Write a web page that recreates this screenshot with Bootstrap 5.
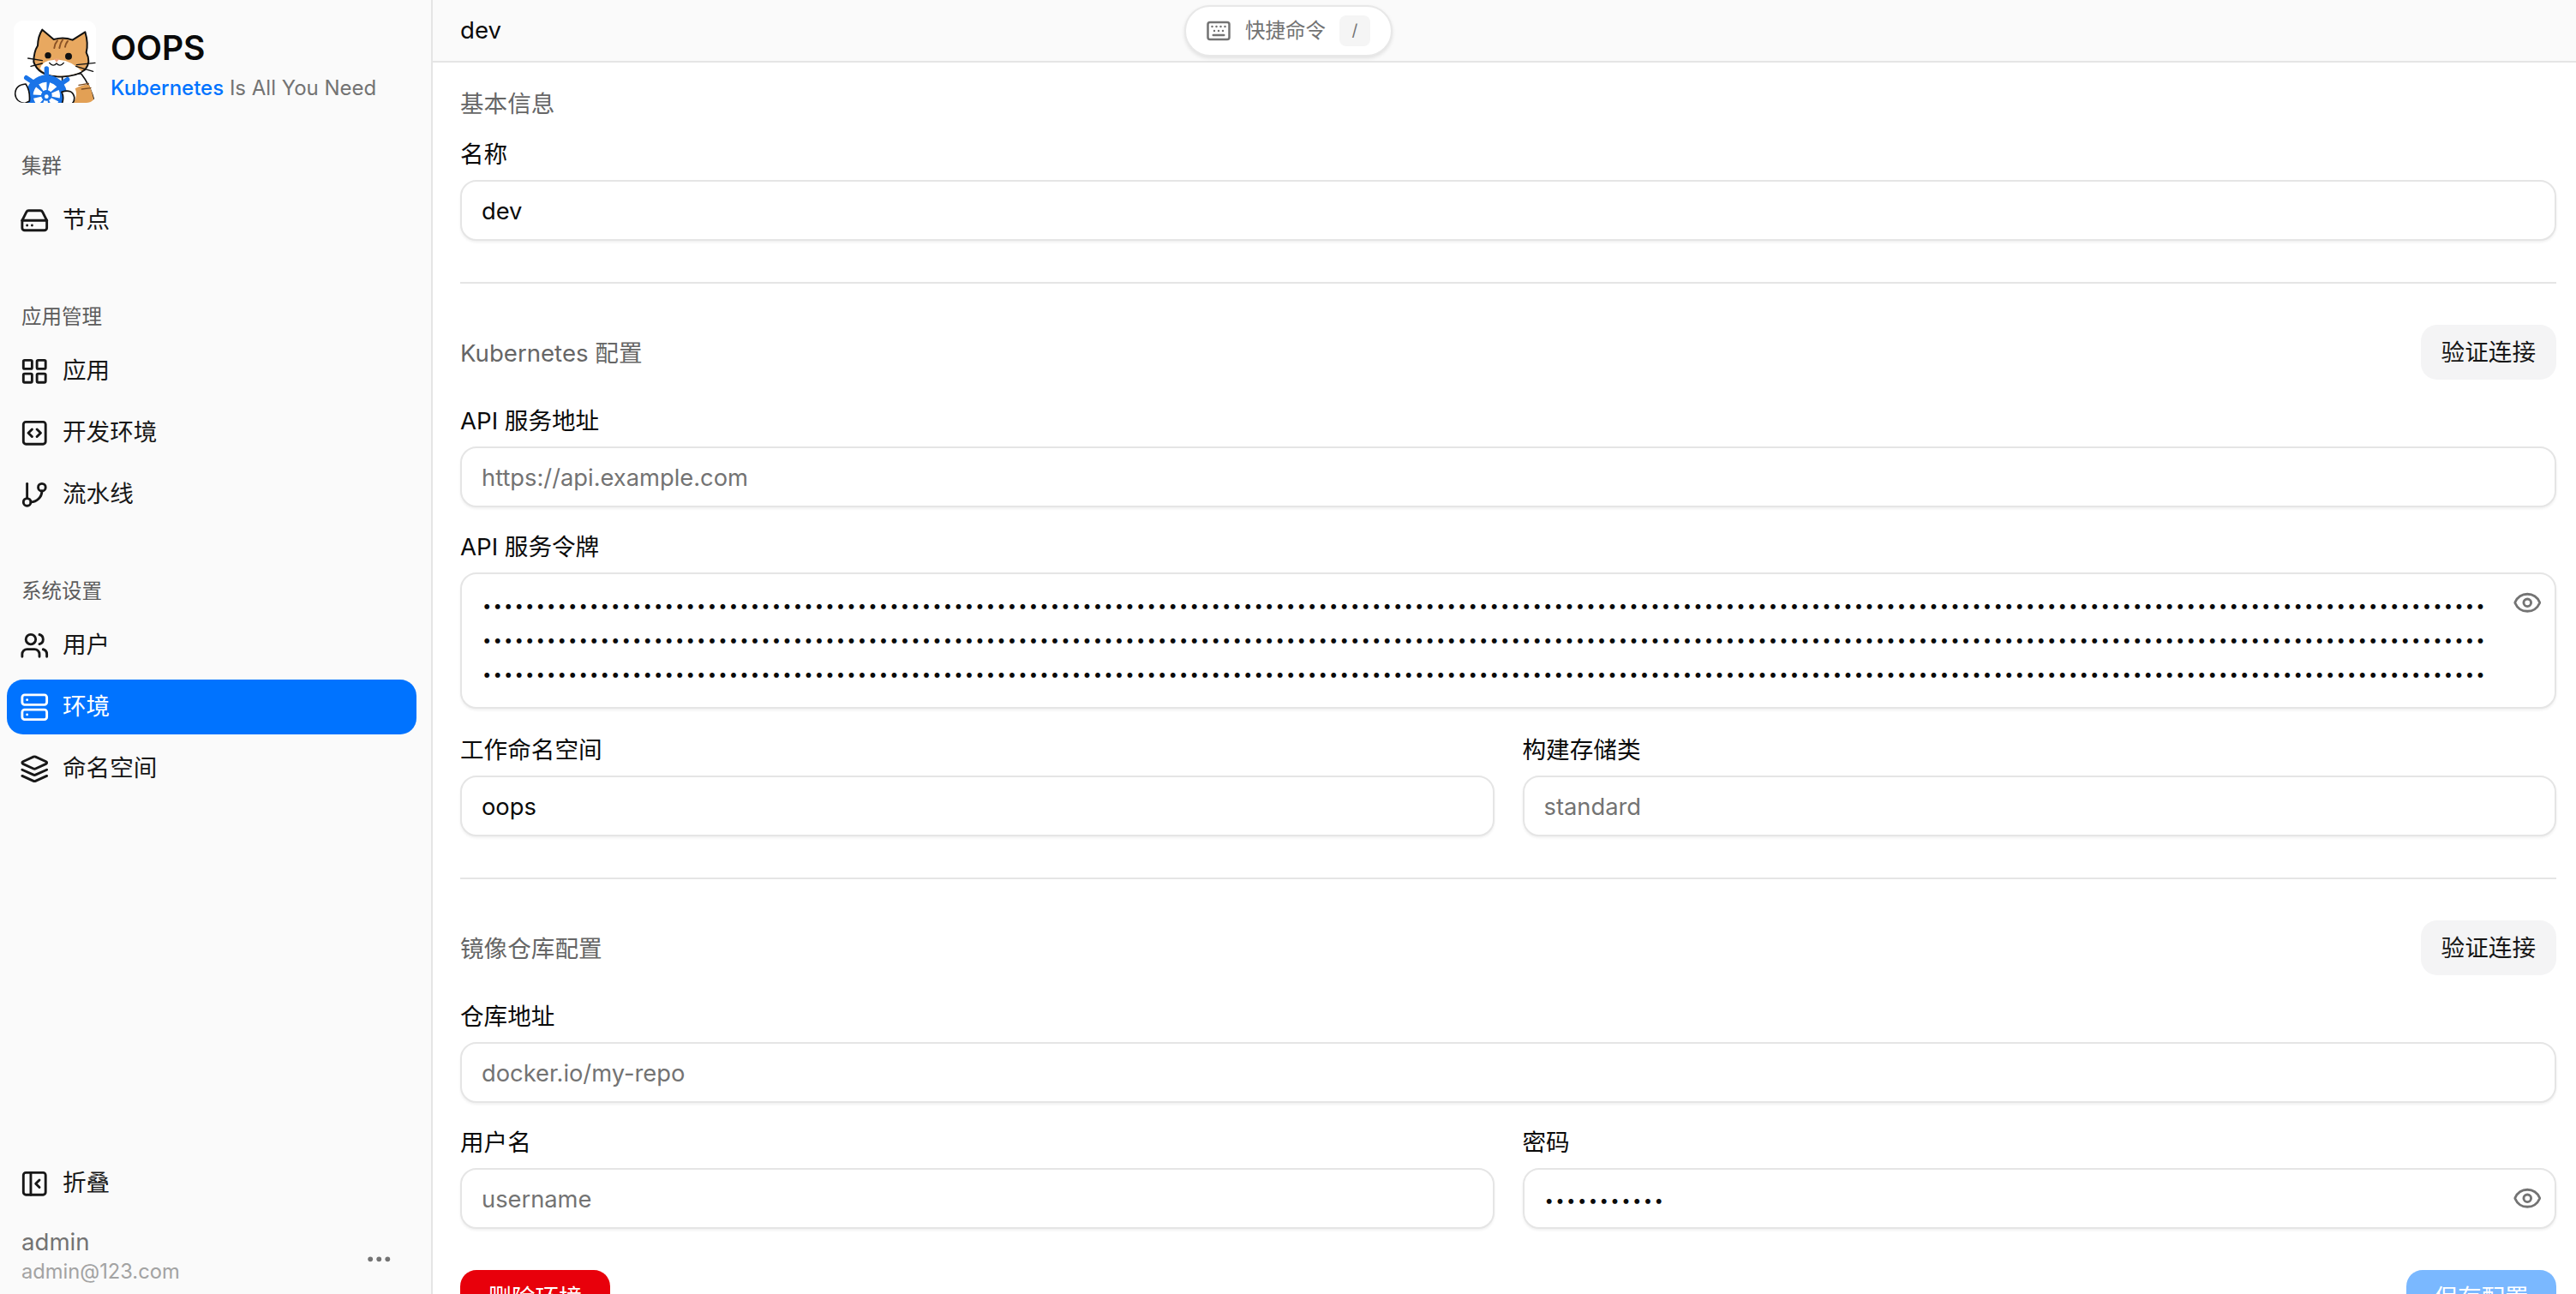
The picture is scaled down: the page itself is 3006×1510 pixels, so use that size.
<!DOCTYPE html>
<html lang="zh-CN">
<head>
  <meta charset="UTF-8">
  <meta name="viewport" content="width=device-width, initial-scale=1">
  <title>OOPS - dev</title>
  <link href="https://cdn.jsdelivr.net/npm/bootstrap@5.3.0/dist/css/bootstrap.min.css" rel="stylesheet">
  <style>
    html, body { height: 100%; overflow: hidden; }
    body {
      font-family: Inter, "Noto Sans CJK SC", sans-serif;
      font-size: 27.6px;
      color: #0a0a0a;
      background: #fff;
    }
    .ic {
      width: 34.5px;
      height: 34.5px;
      flex: none;
      fill: none;
      stroke: currentColor;
      stroke-width: 2;
      stroke-linecap: round;
      stroke-linejoin: round;
    }

    /* sidebar */
    .side {
      width: 505px;
      flex: none;
      background: #fafafa;
      border-right: 2px solid #e5e5e5;
      padding: 24px 17px 0 8px;
    }
    .brand { padding-left: 8px; gap: 17px; margin-bottom: 51px; }
    .brand-logo { width: 96px; height: 96px; flex: none; }
    .brand-name { font-size: 39px; font-weight: 600; line-height: 46px; margin-top: 9px; }
    .brand-sub { font-size: 24px; line-height: 32px; color: #737373; margin-top: 8px; white-space: nowrap; }
    .brand-sub b { color: #0073ff; font-weight: 500; }
    .side-group { margin-bottom: 50px; }
    .side-label {
      height: 46px;
      margin-bottom: 8px;
      padding-left: 17px;
      font-size: 23.5px;
      color: #5c5c5c;
      display: flex;
      align-items: center;
    }
    .side-link {
      height: 64px;
      margin-bottom: 8px;
      padding-left: 15px;
      gap: 15.5px;
      border-radius: 19px;
      color: #171717;
      text-decoration: none;
    }
    .side-link.on { background: #0073ff; color: #fff; }
    .side-fold { margin-bottom: 17px; }
    .side-user { padding: 0 0 10px 17px; }
    .side-user-name { line-height: 38px; color: #737373; }
    .side-user-mail { font-size: 23.7px; line-height: 32px; color: #a3a3a3; }
    .side-more { color: #737373; margin-right: 27px; margin-top: 8px; fill: currentColor; stroke: none; }

    /* top bar */
    .topbar {
      height: 73px;
      flex: none;
      background: #fafafa;
      border-bottom: 2px solid #e5e5e5;
      padding-left: 32px;
    }
    .cmd-pill {
      position: absolute;
      top: 6px;
      left: 1382px;
      width: 243px;
      height: 60px;
      background: #fff;
      border: 2px solid #e8e8e8;
      border-radius: 30px;
      box-shadow: 0 2px 4px rgba(0, 0, 0, .1);
      gap: 16px;
      padding-left: 23px;
      color: #737373;
      font-size: 23.5px;
    }
    .cmd-pill .ic { width: 30px; height: 30px; }
    .cmd-key {
      width: 36px;
      height: 36px;
      border-radius: 8px;
      background: #f5f5f5;
      font-size: 19px;
    }

    /* form */
    .form-wrap { padding: 28px 23px 0 32px; flex: 1; overflow: hidden; }
    .sec-title { color: #666; line-height: 40px; }
    .sec-head .sec-title { padding-top: 2px; }
    .sec-head { height: 65px; }
    .fld { margin-top: 24px; }
    .fld-wide { margin-top: 26px; }
    .fld-first { margin-top: 17px; }
    .fld-top { margin-top: 26px; }
    .fld-label { display: block; font-weight: 400; line-height: 40px; padding-top: 2px; margin-bottom: 10px; color: #0a0a0a; }
    .fld-input.form-control {
      height: 71px;
      padding: 2px 23px 0;
      font-size: 27.3px;
      color: #0a0a0a;
      border: 2px solid #e5e5e5;
      border-radius: 19px;
      box-shadow: 0 2px 3px rgba(0, 0, 0, .06);
    }
    .fld-input.form-control::placeholder { color: #737373; opacity: 1; }
    .fld-input.fld-secret.form-control { font-size: 18.5px; letter-spacing: 2.4px; padding-left: 24px; }
    textarea.fld-input.fld-secret.form-control {
      height: 159px;
      padding: 16px 74px 0 24px;
      line-height: 40px;
      letter-spacing: 2.1px;
      resize: none;
      overflow: hidden;
      -webkit-text-security: disc;
    }
    .sec-line { margin: 48px 0 47px; border: 0; border-top: 2px solid #e5e5e5; opacity: 1; }
    .eye { position: absolute; right: 17px; top: 18px; color: #737373; }
    .act-btn {
      height: 64px;
      border: 0;
      border-radius: 19px;
      font-size: 27.6px;
      font-weight: 400;
      padding: 2px 24px 0;
    }
    .act-soft { background: #f4f4f5; color: #171717; }
    .act-del { width: 175px; background: #e8000b; color: #fff; }
    .act-save { width: 175px; background: #7ab8ff; color: #fff; }
    .row-gap { --bs-gutter-x: 33px; }
    .act-row { margin-top: 48px; }
  </style>
</head>
<body>
<div class="d-flex h-100">

  <!-- 侧边栏 -->
  <aside class="side d-flex flex-column">
    <div class="brand d-flex">
      <svg class="brand-logo" viewBox="0 0 288 288">
        <defs><clipPath id="logoClip"><rect width="288" height="288" rx="34"/></clipPath></defs>
        <rect width="288" height="288" rx="34" fill="#fff"/>
        <g clip-path="url(#logoClip)" stroke-linecap="round" stroke-linejoin="round">
          <path d="M236 186Q268 225 285 292H170V186Z" fill="#fff" stroke="#111" stroke-width="5"/>
          <path d="M215 238Q250 220 264 226Q276 250 282 290H208Q226 265 215 238Z" fill="#e2a055"/>
          <path d="M228 226 262 220M238 240 270 236" fill="none" stroke="#7a4a20" stroke-width="4"/>
          <path d="M84 88Q85 55 100 32L140 66Q175 56 206 68L250 40Q262 80 254 112Q272 145 250 172Q215 200 150 196Q85 190 70 145Q70 110 84 88Z" fill="#e8a860" stroke="#111" stroke-width="6"/>
          <path d="M92 168Q100 140 140 138L150 134 162 138Q200 140 238 178Q205 196 150 193Q108 190 92 168Z" fill="#fff"/>
          <path d="M142 96Q144 80 153 70M160 96Q163 78 172 66M180 92Q182 80 189 72" fill="none" stroke="#8a5226" stroke-width="6"/>
          <circle cx="120" cy="122" r="11" fill="#111"/>
          <circle cx="192" cy="125" r="12" fill="#111"/>
          <path d="M141 134H160L150 146Z" fill="#f2a27c"/>
          <path d="M125 148Q138 164 150 150Q162 164 175 148" fill="none" stroke="#111" stroke-width="4"/>
          <path d="M50 132 100 140M60 160 100 150M285 148 220 155M278 178 218 160" fill="none" stroke="#111" stroke-width="4"/>
          <!-- 舵轮 -->
          <path d="M115 168V192M44 200 62 212M188 206 170 218" fill="none" stroke="#1a74e8" stroke-width="16"/>
          <circle cx="115" cy="262" r="72" fill="#1a74e8"/>
          <circle cx="115" cy="262" r="33" fill="none" stroke="#fff" stroke-width="28" stroke-dasharray="20.6 9" stroke-linecap="butt" transform="rotate(-76 115 262)"/>
          <circle cx="115" cy="266" r="7" fill="#fff"/>
          <path d="M42 222Q5 225 5 258Q8 285 38 290L55 282Q58 245 42 222Z" fill="#fff" stroke="#111" stroke-width="5"/>
          <path d="M168 250Q205 238 212 268Q214 285 200 294H168Q178 270 168 250Z" fill="#fff" stroke="#111" stroke-width="5"/>
        </g>
      </svg>
      <div>
        <div class="brand-name">OOPS</div>
        <div class="brand-sub"><b>Kubernetes</b> Is All You Need</div>
      </div>
    </div>

    <div class="side-group">
      <div class="side-label">集群</div>
      <a class="side-link d-flex align-items-center" href="#">
        <svg class="ic" viewBox="0 0 24 24"><line x1="22" x2="2" y1="12" y2="12"/><path d="M5.45 5.11 2 12v6a2 2 0 0 0 2 2h16a2 2 0 0 0 2-2v-6l-3.45-6.89A2 2 0 0 0 16.76 4H7.24a2 2 0 0 0-1.79 1.11z"/><line x1="6" x2="6.01" y1="16" y2="16"/><line x1="10" x2="10.01" y1="16" y2="16"/></svg>
        节点
      </a>
    </div>

    <div class="side-group">
      <div class="side-label">应用管理</div>
      <a class="side-link d-flex align-items-center" href="#">
        <svg class="ic" viewBox="0 0 24 24"><rect width="7" height="7" x="3" y="3" rx="1"/><rect width="7" height="7" x="14" y="3" rx="1"/><rect width="7" height="7" x="14" y="14" rx="1"/><rect width="7" height="7" x="3" y="14" rx="1"/></svg>
        应用
      </a>
      <a class="side-link d-flex align-items-center" href="#">
        <svg class="ic" viewBox="0 0 24 24"><path d="m10 9-3 3 3 3"/><path d="m14 15 3-3-3-3"/><rect x="3" y="3" width="18" height="18" rx="2"/></svg>
        开发环境
      </a>
      <a class="side-link d-flex align-items-center" href="#">
        <svg class="ic" viewBox="0 0 24 24"><line x1="6" x2="6" y1="3" y2="15"/><circle cx="18" cy="6" r="3"/><circle cx="6" cy="18" r="3"/><path d="M18 9a9 9 0 0 1-9 9"/></svg>
        流水线
      </a>
    </div>

    <div class="side-group">
      <div class="side-label">系统设置</div>
      <a class="side-link d-flex align-items-center" href="#">
        <svg class="ic" viewBox="0 0 24 24"><path d="M16 21v-2a4 4 0 0 0-4-4H6a4 4 0 0 0-4 4v2"/><circle cx="9" cy="7" r="4"/><path d="M22 21v-2a4 4 0 0 0-3-3.87"/><path d="M16 3.13a4 4 0 0 1 0 7.75"/></svg>
        用户
      </a>
      <a class="side-link on d-flex align-items-center" href="#">
        <svg class="ic" viewBox="0 0 24 24"><rect width="20" height="8" x="2" y="2" rx="2" ry="2"/><rect width="20" height="8" x="2" y="14" rx="2" ry="2"/><line x1="6" x2="6.01" y1="6" y2="6"/><line x1="6" x2="6.01" y1="18" y2="18"/></svg>
        环境
      </a>
      <a class="side-link d-flex align-items-center" href="#">
        <svg class="ic" viewBox="0 0 24 24"><path d="m12.83 2.18a2 2 0 0 0-1.66 0L2.6 6.08a1 1 0 0 0 0 1.83l8.58 3.91a2 2 0 0 0 1.66 0l8.58-3.9a1 1 0 0 0 0-1.83Z"/><path d="m22 17.65-9.17 4.16a2 2 0 0 1-1.66 0L2 17.65"/><path d="m22 12.65-9.17 4.16a2 2 0 0 1-1.66 0L2 12.65"/></svg>
        命名空间
      </a>
    </div>

    <div class="mt-auto">
      <a class="side-link side-fold d-flex align-items-center" href="#">
        <svg class="ic" viewBox="0 0 24 24"><rect width="18" height="18" x="3" y="3" rx="2"/><path d="M9 3v18"/><path d="m16 15-3-3 3-3"/></svg>
        折叠
      </a>
      <div class="side-user d-flex align-items-center justify-content-between">
        <div>
          <div class="side-user-name">admin</div>
          <div class="side-user-mail">admin@123.com</div>
        </div>
        <svg class="ic side-more" viewBox="0 0 24 24"><circle cx="5" cy="12" r="2"/><circle cx="12" cy="12" r="2"/><circle cx="19" cy="12" r="2"/></svg>
      </div>
    </div>
  </aside>

  <!-- 主内容 -->
  <main class="flex-grow-1 d-flex flex-column overflow-hidden">
    <div class="topbar d-flex align-items-center">dev</div>
    <div class="cmd-pill d-flex align-items-center">
      <svg class="ic" viewBox="0 0 24 24"><path d="M10 8h.01"/><path d="M12 12h.01"/><path d="M14 8h.01"/><path d="M16 12h.01"/><path d="M18 8h.01"/><path d="M6 8h.01"/><path d="M7 16h10"/><path d="M8 12h.01"/><rect width="20" height="16" x="2" y="4" rx="2"/></svg>
      <span>快捷命令</span>
      <span class="cmd-key d-flex align-items-center justify-content-center">/</span>
    </div>

    <div class="form-wrap">
      <div class="sec-title">基本信息</div>
      <div class="fld-first">
        <label class="fld-label">名称</label>
        <input class="form-control fld-input" value="dev">
      </div>

      <hr class="sec-line">

      <div class="sec-head d-flex align-items-center justify-content-between">
        <div class="sec-title">Kubernetes 配置</div>
        <button class="btn act-btn act-soft">验证连接</button>
      </div>
      <div class="fld-top">
        <label class="fld-label">API 服务地址</label>
        <input class="form-control fld-input" placeholder="https://api.example.com">
      </div>
      <div class="fld">
        <label class="fld-label">API 服务令牌</label>
        <div class="position-relative">
          <textarea class="form-control fld-input fld-secret" id="tokenBox" readonly></textarea>
          <svg class="ic eye" viewBox="0 0 24 24"><path d="M2.062 12.348a1 1 0 0 1 0-.696 10.75 10.75 0 0 1 19.876 0 1 1 0 0 1 0 .696 10.75 10.75 0 0 1-19.876 0"/><circle cx="12" cy="12" r="3"/></svg>
        </div>
      </div>
      <div class="row row-gap fld-wide">
        <div class="col-6">
          <label class="fld-label">工作命名空间</label>
          <input class="form-control fld-input" value="oops">
        </div>
        <div class="col-6">
          <label class="fld-label">构建存储类</label>
          <input class="form-control fld-input" placeholder="standard">
        </div>
      </div>

      <hr class="sec-line">

      <div class="sec-head d-flex align-items-center justify-content-between">
        <div class="sec-title">镜像仓库配置</div>
        <button class="btn act-btn act-soft">验证连接</button>
      </div>
      <div class="fld-top">
        <label class="fld-label">仓库地址</label>
        <input class="form-control fld-input" placeholder="docker.io/my-repo">
      </div>
      <div class="row row-gap fld">
        <div class="col-6">
          <label class="fld-label">用户名</label>
          <input class="form-control fld-input" placeholder="username">
        </div>
        <div class="col-6">
          <label class="fld-label">密码</label>
          <div class="position-relative">
            <input class="form-control fld-input fld-secret" type="password" value="secretpass1">
            <svg class="ic eye" viewBox="0 0 24 24"><path d="M2.062 12.348a1 1 0 0 1 0-.696 10.75 10.75 0 0 1 19.876 0 1 1 0 0 1 0 .696 10.75 10.75 0 0 1-19.876 0"/><circle cx="12" cy="12" r="3"/></svg>
          </div>
        </div>
      </div>

      <div class="act-row d-flex justify-content-between">
        <button class="btn act-btn act-del">删除环境</button>
        <button class="btn act-btn act-save">保存配置</button>
      </div>
    </div>
  </main>
</div>

<script src="https://cdn.jsdelivr.net/npm/bootstrap@5.3.0/dist/js/bootstrap.bundle.min.js"></script>
<script>
  // 令牌内容只显示为圆点
  document.getElementById("tokenBox").value = "eyJhbGciOiJSUzI1NiIsImtpZCI6".repeat(30);
</script>
</body>
</html>
